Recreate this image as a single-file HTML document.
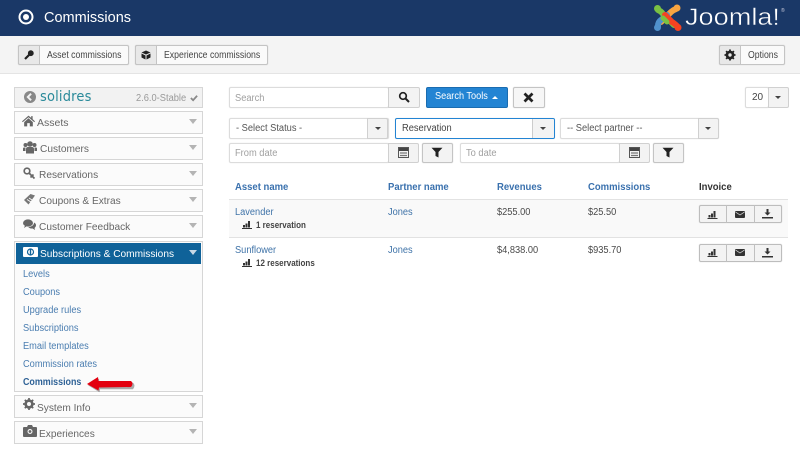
<!DOCTYPE html>
<html><head><meta charset="utf-8"><style>
*{box-sizing:border-box}
html,body{margin:0;padding:0}
body{width:800px;height:450px;overflow:hidden;background:#fff;position:relative;font-family:"Liberation Sans",sans-serif;font-size:10px;color:#4a4a4a}
.a,.t{position:absolute}
.t{white-space:nowrap;line-height:12px;transform-origin:0 0}
.s{transform:scaleX(.925)}
.tb{transform:scaleX(.87);font-size:10px;color:#444;top:50px}
.btn{position:absolute;border:1px solid #c4c4c4;border-radius:2px;background:#f7f7f7;box-shadow:0 0 1px #ccc}
.ic{position:absolute;background:#e8e8e8;border:1px solid #c4c4c4;border-radius:2px 0 0 2px}
.acc{position:absolute;left:14px;width:189px;height:23px;background:#fbfbfb;border:1px solid #d6d6d6}
.acc .t{font-size:10.500px;color:#666;top:5px;transform:scaleX(.965)}
.car{position:absolute;width:0;height:0;border-left:4px solid transparent;border-right:4px solid transparent;border-top:5px solid #b4b4b4;left:174px;top:7px}
.car2{position:absolute;width:0;height:0;border-left:3px solid transparent;border-right:3px solid transparent;border-top:3px solid #444}
.inp{position:absolute;background:#fff;border:1px solid #dcdcdc;border-radius:2px;height:21px;color:#a0a0a0;line-height:20px;padding-left:5px;font-size:10px;box-shadow:0 0 1px #ddd}
.inp span{display:inline-block;transform-origin:0 50%;transform:scaleX(.93)}
.sel{color:#555;padding-left:6px}
.add{position:absolute;background:#f3f3f3;border:1px solid #d0d0d0;border-radius:0 2px 2px 0;height:21px}
.link{color:#3f73a8}
.lnk{left:23px;color:#4a7db0;transform:scaleX(.925)}
.th{top:182px;font-weight:bold;color:#3a71ae;font-size:10px;transform:scaleX(.95)}
.rs{font-size:9px;font-weight:bold;color:#444;transform:scaleX(.89)}
svg{position:absolute;display:block}
</style></head><body>

<div class="a" style="left:0;top:0;width:800px;height:36px;background:#1a3867"></div>
<svg style="left:18px;top:9px" width="16" height="16" viewBox="0 0 16 16"><circle cx="8" cy="8" r="6.500" fill="none" stroke="#fff" stroke-width="2"/><circle cx="8" cy="8" r="3" fill="#fff"/></svg>
<div class="t" style="left:44px;top:9px;font-size:14.500px;line-height:18px;color:#fff">Commissions</div>

<svg style="left:653px;top:3px" width="29" height="29" viewBox="0 0 29 29" fill="none" stroke-linecap="round">
<path d="M21 22 L10 11 Q8 8 5 7" stroke="#7ac143" stroke-width="6"/>
<circle cx="4.500" cy="5.500" r="3.500" fill="#7ac143"/>
<path d="M8 19 L18 9 Q20 7 23 6" stroke="#f9a541" stroke-width="6"/>
<circle cx="24" cy="5" r="3.500" fill="#f9a541"/>
<path d="M5 23 Q5 19 8 17 L14 12" stroke="#5091cd" stroke-width="6"/>
<circle cx="4.500" cy="24.500" r="3.500" fill="#5091cd"/>
<path d="M24 23 Q21 20 19 19 L12 12" stroke="#f44321" stroke-width="6"/>
<circle cx="25" cy="24.500" r="3.500" fill="#f44321"/>
<path d="M10 15 L14 19" stroke="#7ac143" stroke-width="5"/>
</svg>
<div class="t" style="left:685px;top:5px;font-size:24px;line-height:26px;color:#fff;-webkit-text-stroke:.4px #1a3867;transform:scaleX(1.130)">Joomla!</div>
<div class="t" style="left:781px;top:8px;font-size:5px;line-height:6px;color:#ccd">®</div>

<div class="a" style="left:0;top:36px;width:800px;height:38px;background:#f4f4f4;border-bottom:1px solid #e4e4e4"></div>

<!-- toolbar -->
<div class="btn" style="left:18px;top:45px;width:111px;height:20px;background:#fafafa"></div>
<div class="ic" style="left:18px;top:45px;width:22px;height:20px"></div>
<svg style="left:24px;top:50px" width="10" height="10" viewBox="0 0 10 10"><circle cx="6.800" cy="3.200" r="2.900" fill="#222"/><path d="M5.500 4.500 1 9" stroke="#222" stroke-width="2.200"/></svg>
<div class="t tb" style="left:47px">Asset commissions</div>

<div class="btn" style="left:135px;top:45px;width:133px;height:20px;background:#fafafa"></div>
<div class="ic" style="left:135px;top:45px;width:22px;height:20px"></div>
<svg style="left:141px;top:50px" width="10" height="10" viewBox="0 0 10 10"><path d="M5 .5 9.500 2.500 5 4.500.5 2.500zM.5 3.500 4.500 5.500V9.500L.5 7.500zM9.500 3.500 5.500 5.500V9.500L9.500 7.500z" fill="#222"/></svg>
<div class="t tb" style="left:164px">Experience commissions</div>

<div class="btn" style="left:719px;top:45px;width:66px;height:20px;background:#fafafa"></div>
<div class="ic" style="left:719px;top:45px;width:22px;height:20px"></div>
<svg style="left:724px;top:49px" width="12" height="12" viewBox="0 0 12 12"><circle cx="6" cy="6" r="3.200" fill="none" stroke="#222" stroke-width="2.400"/><path d="M6 .5v11M.5 6h11M2.100 2.100l7.800 7.800M9.900 2.100l-7.800 7.800" stroke="#222" stroke-width="1.800"/><circle cx="6" cy="6" r="1.700" fill="#e8e8e8"/></svg>
<div class="t tb" style="left:748px">Options</div>

<!-- sidebar -->
<div class="acc" style="top:87px;height:21px;background:#f2f2f2">
 <svg style="left:9px;top:3px" width="12" height="12" viewBox="0 0 11 11"><circle cx="5.500" cy="5.500" r="5.500" fill="#888"/><path d="M6.500 2.500 3.500 5.500 6.500 8.500" fill="none" stroke="#f2f2f2" stroke-width="1.800"/></svg>
 <div class="t" style="left:25px;top:1px;font-size:14px;line-height:17px;color:#2a8a9a;letter-spacing:.2px;font-family:'DejaVu Sans',sans-serif;transform:scaleX(.93)">solidres</div>
 <div class="t" style="left:121px;top:5px;font-size:10px;color:#999;transform:scaleX(.93)">2.6.0-Stable</div>
 <svg style="left:175px;top:6px" width="8" height="8" viewBox="0 0 9 8"><path d="M1 4 3.500 6.500 8 1.500" fill="none" stroke="#888" stroke-width="2"/></svg>
</div>

<div class="acc" style="top:111px">
 <svg style="left:7px;top:3px" width="13" height="12" viewBox="0 0 12 11"><path d="M6 .5 0 5.800l.7.700L6 2l5.300 4.500.7-.7L9.800 3.800V1H8.500v1.600zM2 6.500 6 3l4 3.500V10.500H7.200V7.500H4.800v3H2z" fill="#666"/></svg>
 <div class="t" style="left:22px;transform:none">Assets</div><div class="car"></div>
</div>
<div class="acc" style="top:137px">
 <svg style="left:8px;top:3px" width="14" height="13" viewBox="0 0 14 13"><circle cx="7" cy="3" r="2.800" fill="#666"/><circle cx="2.500" cy="4" r="2" fill="#666"/><circle cx="11.500" cy="4" r="2" fill="#666"/><path d="M3 12.500V8a2 2 0 0 1 2-2h4a2 2 0 0 1 2 2v4.500zM0 10V7.500Q0 6.500 1 6.500h1.500V10zM14 10V7.500Q14 6.500 13 6.500h-1.500V10z" fill="#666"/></svg>
 <div class="t" style="left:25px">Customers</div><div class="car"></div>
</div>
<div class="acc" style="top:163px">
 <svg style="left:8px;top:3px" width="13" height="13" viewBox="0 0 13 13"><circle cx="4" cy="4" r="2.800" fill="none" stroke="#666" stroke-width="1.700"/><path d="M6 6l5.500 5.500M9 9l-1.500 1.500M10.500 7.500 9 9" fill="none" stroke="#666" stroke-width="1.700"/></svg>
 <div class="t" style="left:24px">Reservations</div><div class="car"></div>
</div>
<div class="acc" style="top:189px">
 <svg style="left:8px;top:3px" width="13" height="13" viewBox="0 0 13 13"><path d="M1 7 7.500 1 12 2.500 5.500 11.500z" fill="#777"/><path d="M4 6.500 8 9M6 5l3 2" stroke="#fff" stroke-width=".8"/></svg>
 <div class="t" style="left:24px">Coupons &amp; Extras</div><div class="car"></div>
</div>
<div class="acc" style="top:215px">
 <svg style="left:8px;top:3px" width="13" height="12" viewBox="0 0 13 12"><ellipse cx="5" cy="4" rx="5" ry="3.600" fill="#666"/><path d="M2 6.500 1 9l3-2z" fill="#666"/><path d="M11 3.500c1.500.7 2 1.700 2 2.800 0 1.200-.8 2.200-1.500 2.700l.6 2-2.500-1.500c-1.700.2-3.500-.3-4.300-1.500 3 0 5.800-1.800 5.700-4.500z" fill="#666"/></svg>
 <div class="t" style="left:24px">Customer Feedback</div><div class="car"></div>
</div>

<div class="a" style="left:14px;top:241px;width:189px;height:151px;background:#fbfbfb;border:1px solid #d6d6d6"></div>
<div class="a" style="left:16px;top:243px;width:185px;height:21px;background:#0f6299"></div>
<svg style="left:23px;top:247px" width="15" height="10" viewBox="0 0 15 10"><rect width="15" height="10" rx="1" fill="#fff"/><circle cx="7.500" cy="5" r="3" fill="none" stroke="#0f6299" stroke-width="1.200"/><rect x="6.800" y="2.500" width="1.400" height="5" fill="#0f6299"/></svg>
<div class="t" style="left:40px;top:248px;font-size:10.500px;color:#fff;transform:scaleX(.965)">Subscriptions &amp; Commissions</div>
<div class="car" style="top:250px;left:189px;border-top-color:#c8d8e6"></div>

<div class="t lnk" style="top:269px">Levels</div>
<div class="t lnk" style="top:287px">Coupons</div>
<div class="t lnk" style="top:305px">Upgrade rules</div>
<div class="t lnk" style="top:323px">Subscriptions</div>
<div class="t lnk" style="top:341px">Email templates</div>
<div class="t lnk" style="top:359px">Commission rates</div>
<div class="t lnk" style="top:377px;font-weight:bold;color:#2f6296;transform:scaleX(.89)">Commissions</div>
<svg style="left:85px;top:375px" width="52" height="18" viewBox="0 0 52 18"><path d="M2 9 13 2.500 13.500 6.500 47 6.500Q50 9 47 13L14 13 13.500 16z" fill="#333" opacity=".4" transform="translate(1 1.200)"/><path d="M2 9 13 2 13.500 6 46 6Q49 8.500 46 12L14 12.500 13.500 15.500z" fill="#e3000f"/></svg>

<div class="acc" style="top:395px">
 <svg style="left:8px;top:2px" width="12" height="12" viewBox="0 0 12 12"><circle cx="6" cy="6" r="3.500" fill="none" stroke="#666" stroke-width="2.400"/><path d="M6 0v12M0 6h12M1.800 1.800l8.400 8.400M10.200 1.800l-8.400 8.400" stroke="#666" stroke-width="1.700"/><circle cx="6" cy="6" r="2" fill="#fbfbfb"/></svg>
 <div class="t" style="left:22px;top:6px">System Info</div><div class="car"></div>
</div>
<div class="acc" style="top:421px">
 <svg style="left:8px;top:3px" width="14" height="12" viewBox="0 0 14 12"><path d="M1 2h3l1-2h4l1 2h3a1 1 0 0 1 1 1v8a1 1 0 0 1-1 1H1a1 1 0 0 1-1-1V3a1 1 0 0 1 1-1z" fill="#666"/><circle cx="7" cy="6.500" r="2.500" fill="#fbfbfb"/><circle cx="7" cy="6.500" r="1.400" fill="#666"/></svg>
 <div class="t" style="left:24px;top:6px">Experiences</div><div class="car"></div>
</div>

<!-- search -->
<div class="inp" style="left:229px;top:87px;width:160px;line-height:21px"><span>Search</span></div>
<div class="add" style="left:388px;top:87px;width:32px"></div>
<svg style="left:398px;top:91px" width="12" height="12" viewBox="0 0 12 12"><circle cx="5" cy="5" r="3.300" fill="none" stroke="#222" stroke-width="1.700"/><path d="M7.500 7.500 11 11" stroke="#222" stroke-width="2"/></svg>
<div class="a" style="left:426px;top:87px;width:82px;height:21px;background:#2384d3;border:1px solid #1a6cb0;border-radius:2px"></div>
<div class="t s" style="left:435px;top:91px;color:#fff;font-size:10.300px;transform:scaleX(.89)">Search Tools</div>
<div class="a" style="left:492px;top:96px;width:0;height:0;border-left:3px solid transparent;border-right:3px solid transparent;border-bottom:3px solid #fff"></div>
<div class="btn" style="left:513px;top:87px;width:32px;height:21px;background:#f6f6f6"></div>
<svg style="left:523px;top:92px" width="11" height="11" viewBox="0 0 11 11"><path d="M1.500 1.500l8 8M9.500 1.500l-8 8" stroke="#222" stroke-width="2.700"/></svg>

<div class="inp" style="left:745px;top:87px;width:24px;color:#444;padding-left:6px">20</div>
<div class="add" style="left:768px;top:87px;width:21px"></div>
<div class="car2" style="left:775px;top:96px"></div>

<!-- filters row 1 -->
<div class="inp sel" style="left:229px;top:118px;width:160px"><span>- Select Status -</span></div>
<div class="add" style="left:367px;top:118px;width:21px"></div><div class="car2" style="left:375px;top:127px"></div>
<div class="inp sel" style="left:395px;top:118px;width:160px;border:1px solid #2384d3;color:#444"><span>Reservation</span></div>
<div class="add" style="left:532px;top:119px;width:22px;height:19px;border:0;border-left:1px solid #ccc"></div><div class="car2" style="left:540px;top:127px"></div>
<div class="inp sel" style="left:560px;top:118px;width:159px"><span>-- Select partner --</span></div>
<div class="add" style="left:698px;top:118px;width:21px"></div><div class="car2" style="left:705px;top:127px"></div>

<!-- filters row 2 -->
<div class="inp" style="left:229px;top:143px;width:160px;height:20px;line-height:19px"><span>From date</span></div>
<div class="add" style="left:388px;top:143px;width:31px;height:20px"></div>
<svg style="left:398px;top:147px" width="11" height="11" viewBox="0 0 11 11"><rect x=".5" y=".5" width="10" height="10" fill="none" stroke="#555"/><rect x="1" y="1" width="9" height="3" fill="#444"/><path d="M2 6h7M2 8.500h7" stroke="#777" stroke-width="1.200"/></svg>
<div class="btn" style="left:422px;top:143px;width:31px;height:20px;background:#f3f3f3"></div>
<svg style="left:431px;top:147px" width="12" height="11" viewBox="0 0 12 11"><path d="M.5 .8h11L7.500 5v5.500L4.500 9V5z" fill="#222"/></svg>

<div class="inp" style="left:460px;top:143px;width:160px;height:20px;line-height:19px"><span>To date</span></div>
<div class="add" style="left:619px;top:143px;width:31px;height:20px"></div>
<svg style="left:629px;top:147px" width="11" height="11" viewBox="0 0 11 11"><rect x=".5" y=".5" width="10" height="10" fill="none" stroke="#555"/><rect x="1" y="1" width="9" height="3" fill="#444"/><path d="M2 6h7M2 8.500h7" stroke="#777" stroke-width="1.200"/></svg>
<div class="btn" style="left:653px;top:143px;width:31px;height:20px;background:#f3f3f3"></div>
<svg style="left:662px;top:147px" width="12" height="11" viewBox="0 0 12 11"><path d="M.5 .8h11L7.500 5v5.500L4.500 9V5z" fill="#222"/></svg>

<!-- table -->
<div class="t th" style="left:235px">Asset name</div>
<div class="t th" style="left:388px">Partner name</div>
<div class="t th" style="left:497px">Revenues</div>
<div class="t th" style="left:588px">Commissions</div>
<div class="t th" style="left:699px;color:#333">Invoice</div>

<div class="a" style="left:229px;top:199px;width:559px;height:39px;background:#f9f9f9;border-top:1px solid #e2e2e2;border-bottom:1px solid #e2e2e2"></div>

<div class="t s link" style="left:235px;top:207px">Lavender</div>
<svg style="left:242px;top:220px" width="10" height="9" viewBox="0 0 10 9"><path d="M0 8.500h10" stroke="#333"/><path d="M1 7.500V5h2v2.500zM3.500 7.500V3.500h2v4zM6 7.500V1h2v6.500z" fill="#333"/></svg>
<div class="t rs" style="left:256px;top:219px">1 reservation</div>
<div class="t s link" style="left:388px;top:207px">Jones</div>
<div class="t s" style="left:497px;top:207px">$255.00</div>
<div class="t s" style="left:588px;top:207px">$25.50</div>

<div class="t s link" style="left:235px;top:245px">Sunflower</div>
<svg style="left:242px;top:258px" width="10" height="9" viewBox="0 0 10 9"><path d="M0 8.500h10" stroke="#333"/><path d="M1 7.500V5h2v2.500zM3.500 7.500V3.500h2v4zM6 7.500V1h2v6.500z" fill="#333"/></svg>
<div class="t rs" style="left:256px;top:257px">12 reservations</div>
<div class="t s link" style="left:388px;top:245px">Jones</div>
<div class="t s" style="left:497px;top:245px">$4,838.00</div>
<div class="t s" style="left:588px;top:245px">$935.70</div>

<!-- row 1 buttons -->
<div class="btn" style="left:699px;top:205px;width:83px;height:18px;background:#f3f3f3;border-color:#bdbdbd"></div>
<div class="a" style="left:726px;top:205px;width:1px;height:18px;background:#c0c0c0"></div>
<div class="a" style="left:754px;top:205px;width:1px;height:18px;background:#c0c0c0"></div>
<svg style="left:707px;top:210px" width="11" height="9" viewBox="0 0 10 9"><path d="M0 8.500h10" stroke="#333"/><path d="M1 7.500V5h2v2.500zM3.500 7.500V3.500h2v4zM6 7.500V1h2v6.500z" fill="#333"/></svg>
<svg style="left:735px;top:211px" width="10" height="7" viewBox="0 0 10 7"><rect width="10" height="7" rx="1" fill="#333"/><path d="M.5 1 5 4l4.500-3" fill="none" stroke="#eee" stroke-width=".7"/></svg>
<svg style="left:762px;top:209px" width="11" height="10" viewBox="0 0 11 10"><path d="M4.500 0h2v3.500H8.500L5.500 6.500 2.500 3.500h2z" fill="#333"/><path d="M0 8h11v1.500H0z" fill="#333"/></svg>

<!-- row 2 buttons -->
<div class="btn" style="left:699px;top:244px;width:83px;height:18px;background:#f3f3f3;border-color:#bdbdbd"></div>
<div class="a" style="left:726px;top:244px;width:1px;height:18px;background:#c0c0c0"></div>
<div class="a" style="left:754px;top:244px;width:1px;height:18px;background:#c0c0c0"></div>
<svg style="left:707px;top:248px" width="11" height="9" viewBox="0 0 10 9"><path d="M0 8.500h10" stroke="#333"/><path d="M1 7.500V5h2v2.500zM3.500 7.500V3.500h2v4zM6 7.500V1h2v6.500z" fill="#333"/></svg>
<svg style="left:735px;top:249px" width="10" height="7" viewBox="0 0 10 7"><rect width="10" height="7" rx="1" fill="#333"/><path d="M.5 1 5 4l4.500-3" fill="none" stroke="#eee" stroke-width=".7"/></svg>
<svg style="left:762px;top:248px" width="11" height="10" viewBox="0 0 11 10"><path d="M4.500 0h2v3.500H8.500L5.500 6.500 2.500 3.500h2z" fill="#333"/><path d="M0 8h11v1.500H0z" fill="#333"/></svg>

</body></html>
